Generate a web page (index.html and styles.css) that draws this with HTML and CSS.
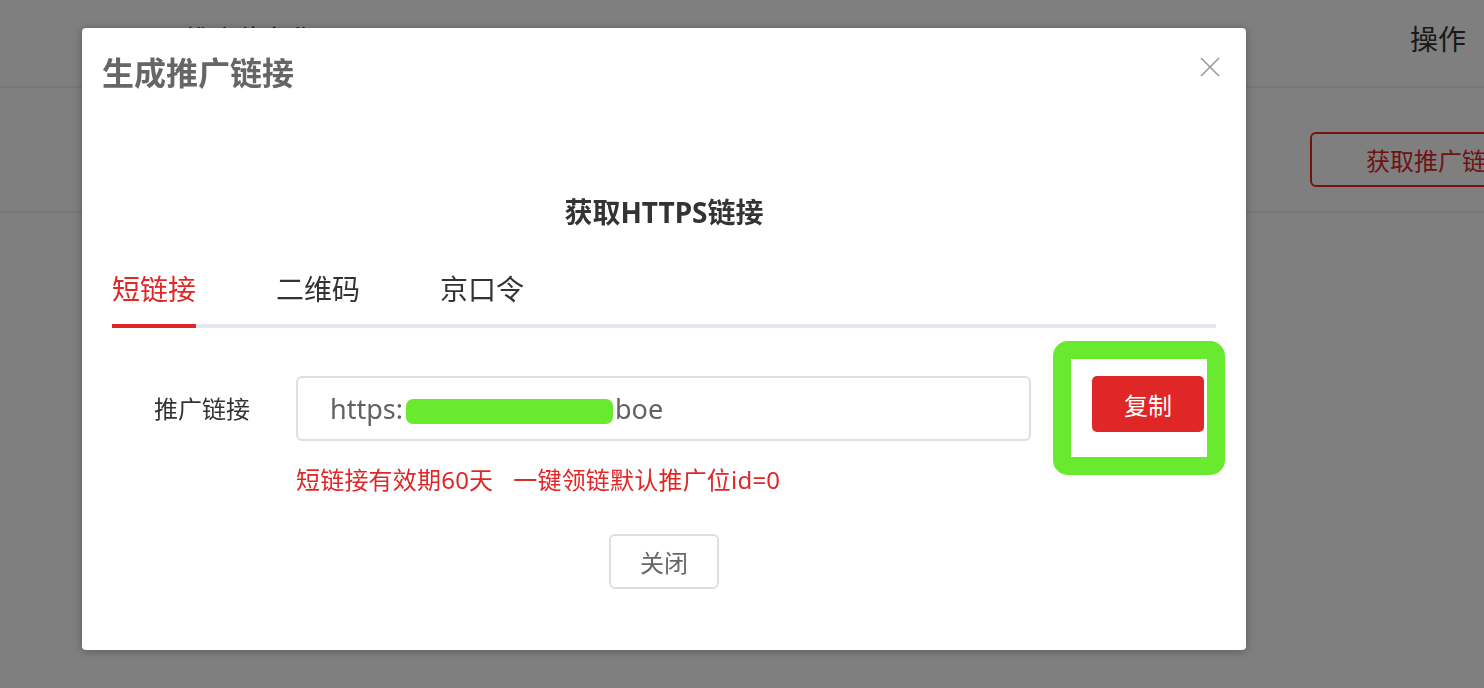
FILE: index.html
```html
<!DOCTYPE html>
<html lang="zh-CN">
<head>
<meta charset="utf-8">
<title>生成推广链接</title>
<link rel="stylesheet" href="styles.css">
</head>
<body>
<div class="page">
  <div class="thead">
    <div class="col col-info">推广位名称</div>
    <div class="col col-op head-op">操作</div>
  </div>
  <div class="trow">
    <div class="col col-info"></div>
    <div class="col col-op"><button class="btn-outline">获取推广链接</button></div>
  </div>
</div>

<div class="mask">
  <div class="dialog">
    <div class="dialog-header">
      <h2 class="dialog-title">生成推广链接</h2>
      <button class="dialog-close" aria-label="关闭">
        <svg width="20" height="20" viewBox="0 0 20 20"><path d="M1 1 L19 19 M19 1 L1 19" stroke="#9a9a9f" stroke-width="1.6" fill="none"/></svg>
      </button>
    </div>
    <div class="dialog-body">
      <h3 class="sub-title">获取HTTPS链接</h3>
      <div class="tabs">
        <div class="tab active">短链接</div>
        <div class="tab">二维码</div>
        <div class="tab">京口令</div>
      </div>
      <div class="form-row">
        <label class="form-label">推广链接</label>
        <div class="form-field">
          <div class="text-input">https:<span class="redact"></span>boe</div>
          <p class="hint">短链接有效期60天<span class="hint-2">一键领链默认推广位id=0</span></p>
        </div>
        <div class="copy-wrap">
          <button class="btn-primary">复制</button>
          <span class="highlight"></span>
        </div>
      </div>
      <div class="footer"><button class="btn-default">关闭</button></div>
    </div>
  </div>
</div>
</body>
</html>
```

FILE: styles.css
```css
html, body {
  margin: 0;
  padding: 0;
}
body {
  width: 1484px;
  height: 688px;
  overflow: hidden;
  font-family: "Noto Sans", "Noto Sans CJK SC", sans-serif;
  background: #fff;
}
button {
  font-family: inherit;
  cursor: pointer;
}

/* underlying page */
.page {
  background: #fff;
  height: 688px;
}
.thead {
  display: flex;
  height: 88px;
  border-bottom: 2px solid #ebeef5;
  box-sizing: border-box;
}
.trow {
  display: flex;
  height: 125px;
  border-bottom: 2px solid #ebeef5;
  box-sizing: border-box;
  padding-top: 44px;
}
.col {
  color: #333;
}
.col-info {
  flex: 0 0 1310px;
  box-sizing: border-box;
  padding-left: 185px;
  font-size: 26px;
  line-height: 78px;
}
.col-op {
  flex: 1;
  white-space: nowrap;
}
.head-op {
  padding-left: 100px;
  font-size: 28px;
  line-height: 78px;
}
.btn-outline {
  height: 55px;
  border: 2px solid #e02727;
  border-radius: 6px;
  background: #fff;
  color: #e02727;
  font-size: 24px;
  padding: 0 54px;
  white-space: nowrap;
}

/* mask + dialog */
.mask {
  position: fixed;
  inset: 0;
  background: rgba(0, 0, 0, 0.5);
  padding: 28px 0 0 82px;
}
.dialog {
  width: 1164px;
  background: #fff;
  border-radius: 4px;
  box-shadow: 0 1px 10px rgba(0, 0, 0, 0.3);
}
.dialog-header {
  display: flex;
  justify-content: space-between;
  align-items: flex-start;
  padding: 20px 26px 0 20px;
}
.dialog-title {
  margin: 0;
  font-size: 32px;
  line-height: 50px;
  font-weight: bold;
  color: #666;
}
.dialog-close {
  margin-top: 9px;
  padding: 0;
  border: 0;
  background: none;
  width: 20px;
  height: 20px;
  display: flex;
}
.dialog-body {
  padding: 0 30px 61px;
}
.sub-title {
  margin: 94px 0 0;
  text-align: center;
  font-size: 28px;
  line-height: 40px;
  font-weight: bold;
  color: #333;
}
.tabs {
  display: flex;
  margin-top: 37px;
  border-bottom: 4px solid #e4e7ed;
}
.tab {
  font-size: 28px;
  line-height: 40px;
  padding-bottom: 15px;
  margin-right: 80px;
  color: #333;
  border-bottom: 4px solid transparent;
  margin-bottom: -4px;
}
.tab.active {
  color: #e02727;
  border-bottom-color: #e02727;
}
.form-row {
  display: flex;
  align-items: flex-start;
  margin-top: 48px;
}
.form-label {
  flex: 0 0 184px;
  box-sizing: border-box;
  padding-right: 46px;
  text-align: right;
  font-size: 24px;
  line-height: 65px;
  color: #333;
}
.form-field {
  flex: 0 0 735px;
}
.text-input {
  height: 65px;
  box-sizing: border-box;
  border: 2px solid #dcdfe6;
  border-radius: 6px;
  padding-left: 32px;
  font-size: 27px;
  line-height: 61px;
  color: #606266;
  white-space: nowrap;
}
.redact {
  display: inline-block;
  width: 207px;
  height: 25px;
  background: #69ea2f;
  border-radius: 7px;
  margin: 0 2px 0 3px;
  vertical-align: middle;
}
.hint {
  margin: 22px 0 0;
  font-size: 24px;
  line-height: 34px;
  color: #e02727;
  white-space: nowrap;
  letter-spacing: 0.2px;
}
.hint-2 {
  margin-left: 20px;
}
.copy-wrap {
  position: relative;
  margin-left: 61px;
}
.btn-primary {
  display: block;
  width: 112px;
  height: 56px;
  border: 0;
  border-radius: 5px;
  background: #e02727;
  color: #fff;
  font-size: 24px;
}
.highlight {
  position: absolute;
  left: -39px;
  top: -35px;
  width: 172px;
  height: 134px;
  box-sizing: border-box;
  border: 18px solid #69ea2f;
  border-radius: 15px;
  pointer-events: none;
}
.footer {
  text-align: center;
  margin-top: 37px;
}
.btn-default {
  width: 110px;
  height: 55px;
  border: 2px solid #dcdfe6;
  border-radius: 6px;
  background: #fff;
  color: #666;
  font-size: 24px;
  padding: 0;
}
```
